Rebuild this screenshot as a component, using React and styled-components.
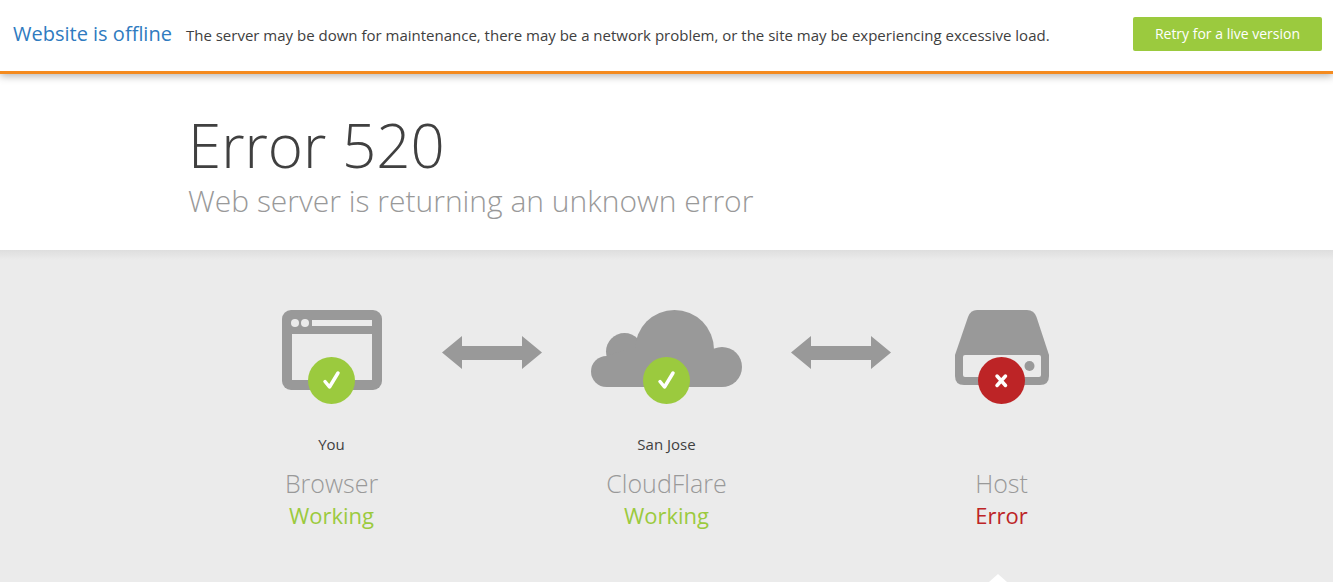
import styled, { createGlobalStyle } from "styled-components";

const nodes = [
  { name: "Browser", place: "You", ok: true, Icon: BrowserIcon },
  { name: "CloudFlare", place: "San Jose", ok: true, Icon: CloudIcon },
  { name: "Host", place: "", ok: false, Icon: HostIcon },
];

function BrowserIcon() {
  return (
    <svg width="100" height="80" viewBox="0 0 100 80">
      <rect width="100" height="80" rx="9" fill="#999" />
      <circle cx="13" cy="13" r="4" fill="#ebebeb" />
      <circle cx="23" cy="13" r="4" fill="#ebebeb" />
      <path d="M30 10H90V16H30ZM10 24H90V70H10Z" fill="#ebebeb" />
    </svg>
  );
}

function CloudIcon() {
  return (
    <svg width="151" height="77" viewBox="0 0 151 77" fill="#999">
      <circle cx="15.5" cy="61.5" r="15.5" />
      <circle cx="33.5" cy="41.5" r="18.5" />
      <circle cx="83.5" cy="39.5" r="39.5" />
      <circle cx="131" cy="57" r="20" />
      <path d="M15.5 77V46L34 40H131V77Z" />
    </svg>
  );
}

function HostIcon() {
  return (
    <svg width="94" height="75" viewBox="0 0 94 75">
      <path
        d="M22 0H72Q79 0 81.5 7L94 45V66Q94 75 85 75H9Q0 75 0 66V45L13 7Q15.5 0 22 0Z"
        fill="#999"
      />
      <rect x="8" y="45" width="78" height="22" rx="2" fill="#ebebeb" />
      <circle cx="74.5" cy="56" r="5" fill="#999" />
    </svg>
  );
}

const Arrow = () => (
  <ArrowIcon viewBox="0 0 100 33" aria-hidden="true">
    <path d="M0 16.500L20 0V10H80V0L100 16.500L80 33V24H20V33Z" fill="#999" />
  </ArrowIcon>
);

const StatusBadge = ({ ok }) => (
  <Badge viewBox="0 0 47 47" aria-hidden="true">
    <circle cx="23.5" cy="23.5" r="23.5" fill={ok ? "#9bca3e" : "#bd2426"} />
    <path
      d={ok ? "M17 24.5L21.5 30L30 16" : "M19 19L27.500 28.500M27.500 19L19 28.500"}
      fill="none"
      stroke="#fff"
      strokeWidth="3.5"
      strokeLinecap="round"
      strokeLinejoin="round"
    />
  </Badge>
);

const Node = ({ name, place, ok, Icon }) => (
  <NodeBox>
    <IconBox>
      <Icon />
      <StatusBadge ok={ok} />
    </IconBox>
    <Place>{place}</Place>
    <NodeName>{name}</NodeName>
    <NodeStatus $ok={ok}>{ok ? "Working" : "Error"}</NodeStatus>
    {!ok && <Caret />}
  </NodeBox>
);

const App = () => {
  return (
    <>
      <GlobalStyle />
      <TopBar>
        <Notice>
          <OfflineLink href="#">Website is offline</OfflineLink>
          <Reason>
            The server may be down for maintenance, there may be a network
            problem, or the site may be experiencing excessive load.
          </Reason>
        </Notice>
        <RetryButton type="button">Retry for a live version</RetryButton>
      </TopBar>
      <Header>
        <Wrapper>
          <Title>Error 520</Title>
          <Subtitle>Web server is returning an unknown error</Subtitle>
        </Wrapper>
      </Header>
      <StatusSection>
        <Diagram>
          <Node {...nodes[0]} />
          <Arrow />
          <Node {...nodes[1]} />
          <Arrow />
          <Node {...nodes[2]} />
        </Diagram>
      </StatusSection>
    </>
  );
};

export default App;

const GlobalStyle = createGlobalStyle`
  * {
    box-sizing: border-box;
  }
  body {
    margin: 0;
    background-color: #fff;
    color: #404040;
    font-family: "Open Sans", "Noto Sans", sans-serif;
    font-size: 15px;
  }
`;

const TopBar = styled.div`
  display: flex;
  justify-content: space-between;
  align-items: flex-start;
  gap: 20px;
  padding: 17px 11px 20px 13px;
  border-bottom: 3px solid #f48b20;
  box-shadow: 0 2px 8px rgba(0, 0, 0, 0.3);
  position: relative;
`;

const Notice = styled.div`
  display: flex;
  flex-wrap: wrap;
  align-items: baseline;
  gap: 0 14px;
  height: 34px;
  line-height: 34px;
`;

const OfflineLink = styled.a`
  color: #2f7bbf;
  font-size: 20px;
  text-decoration: none;
`;

const Reason = styled.span``;

const RetryButton = styled.button`
  flex-shrink: 0;
  height: 34px;
  padding: 0 22px 2px;
  border: none;
  border-radius: 2px;
  background-color: #9bca3e;
  color: #fff;
  font-family: inherit;
  font-size: 14px;
  cursor: pointer;
`;

const Header = styled.header`
  padding: 38px 20px 29px;
`;

const Wrapper = styled.div`
  max-width: 957px;
  margin: 0 auto;
`;

const Title = styled.h1`
  margin: 0;
  font-size: 60px;
  font-weight: 300;
  line-height: 66px;
`;

const Subtitle = styled.h2`
  margin: 3px 0 0;
  color: #999;
  font-size: 30px;
  font-weight: 300;
  line-height: 40px;
`;

const StatusSection = styled.section`
  padding: 60px 20px 0;
  background: linear-gradient(#dedede, #ebebeb 10px);
  overflow: hidden;
`;

const Diagram = styled.div`
  display: grid;
  grid-template-columns: 221fr 100px 249fr 100px 221fr;
  max-width: 891px;
  margin: 0 auto;
`;

const NodeBox = styled.div`
  display: flex;
  flex-direction: column;
  align-items: center;
  padding-bottom: 51px;
  text-align: center;
  position: relative;
`;

const IconBox = styled.div`
  height: 94px;
  position: relative;
`;

const Badge = styled.svg`
  width: 47px;
  height: 47px;
  position: absolute;
  bottom: 0;
  left: calc(50% - 24px);
`;

const ArrowIcon = styled.svg`
  width: 100px;
  height: 33px;
  margin-top: 26px;
`;

const Place = styled.div`
  height: 20px;
  margin-top: 30px;
  line-height: 20px;
`;

const NodeName = styled.h3`
  margin: 13px 0 0;
  color: #999;
  font-size: 25px;
  font-weight: 300;
  line-height: 32px;
`;

const NodeStatus = styled.div`
  color: ${({ $ok }) => ($ok ? "#9bca3e" : "#bd2426")};
  font-size: 22px;
  line-height: 32px;
`;

const Caret = styled.div`
  position: absolute;
  bottom: 0;
  left: calc(50% - 13px);
  border: 9px solid transparent;
  border-top: none;
  border-bottom: 8px solid #fff;
`;
